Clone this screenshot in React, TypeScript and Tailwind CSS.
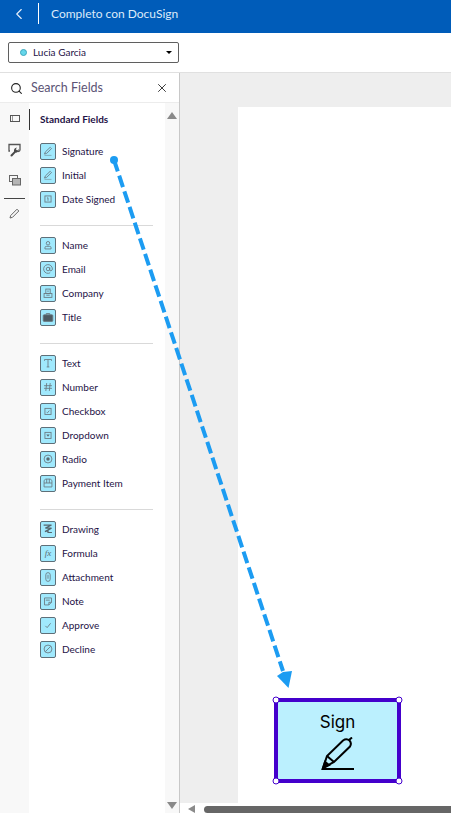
import React from 'react';
import { ChevronLeft, Search, X } from 'lucide-react';

const font = "font-['Lato','Noto_Sans',sans-serif]";

function Glyph({ children }: { children: React.ReactNode }) {
  return (
    <svg width="16" height="16" viewBox="0 0 16 16" fill="none" stroke="#6a7a82" strokeWidth="1">
      {children}
    </svg>
  );
}

const pencil = (
  <Glyph>
    <path d="M4 11.5 L5 9 L10.5 3.8 L12 5.3 L6.5 10.7 Z" />
    <path d="M4 13 H12" strokeOpacity="0.6" />
  </Glyph>
);

const groups = [
  [
    { label: 'Signature', icon: pencil },
    { label: 'Initial', icon: pencil },
    {
      label: 'Date Signed',
      icon: (
        <Glyph>
          <rect x="4.5" y="4.5" width="7" height="7" />
          <path d="M7 7 L8 6.5 V10" />
        </Glyph>
      ),
    },
  ],
  [
    {
      label: 'Name',
      icon: (
        <Glyph>
          <circle cx="8" cy="6" r="2" />
          <path d="M4.5 12.5 V11 Q4.5 9.5 6.5 9.5 H9.5 Q11.5 9.5 11.5 11 V12.5 Z" />
        </Glyph>
      ),
    },
    {
      label: 'Email',
      icon: (
        <Glyph>
          <circle cx="8" cy="8" r="2" />
          <path d="M10 6 V9 Q10 10.5 11.5 10 Q13 9.5 13 8 A5 5 0 1 0 10.5 12.3" />
        </Glyph>
      ),
    },
    {
      label: 'Company',
      icon: (
        <Glyph>
          <rect x="5.5" y="3.5" width="5" height="5" />
          <rect x="3.5" y="8.5" width="9" height="4.5" />
          <path d="M8 5 V7 M6 10.5 H10" />
        </Glyph>
      ),
    },
    {
      label: 'Title',
      icon: (
        <Glyph>
          <rect x="2.5" y="5.5" width="11" height="7.5" rx="1" fill="#4d5b63" />
          <path d="M6 5.5 V4 H10 V5.5" />
        </Glyph>
      ),
    },
  ],
  [
    {
      label: 'Text',
      icon: (
        <Glyph>
          <path d="M4 5.5 V4 H12 V5.5 M8 4 V12.5 M6.5 12.5 H9.5" />
        </Glyph>
      ),
    },
    {
      label: 'Number',
      icon: (
        <Glyph>
          <path d="M6.5 3.5 L5.5 12.5 M10.5 3.5 L9.5 12.5 M3.5 6.5 H12.5 M3.5 9.5 H12.5" />
        </Glyph>
      ),
    },
    {
      label: 'Checkbox',
      icon: (
        <Glyph>
          <rect x="4.5" y="5" width="7" height="7" />
          <path d="M6.5 9.5 L7.5 10 L9.5 7.5" />
        </Glyph>
      ),
    },
    {
      label: 'Dropdown',
      icon: (
        <Glyph>
          <rect x="4.5" y="5" width="7" height="7" />
          <path d="M6 7.5 H10 L8 10 Z" fill="#5b6b73" stroke="none" />
        </Glyph>
      ),
    },
    {
      label: 'Radio',
      icon: (
        <Glyph>
          <circle cx="8" cy="8" r="4.5" />
          <circle cx="8" cy="8" r="2" fill="#5b6b73" stroke="none" />
        </Glyph>
      ),
    },
    {
      label: 'Payment Item',
      icon: (
        <Glyph>
          <path d="M3.5 12.5 V5.5 L5 3.5 H11 L12.5 5.5 V12.5 Z M3.5 8 H12.5 M6.5 3.5 V8 M9.5 3.5 V8" />
        </Glyph>
      ),
    },
  ],
  [
    {
      label: 'Drawing',
      icon: (
        <Glyph>
          <path d="M3 3.5 H12 L5 7 H12 L4.5 11 L8 9.5 V12 H12.5" strokeWidth="1.4" stroke="#55656d" />
        </Glyph>
      ),
    },
    {
      label: 'Formula',
      icon: <span className="font-['Liberation_Serif',serif] text-[9px] italic leading-none text-[#5b6b73]">fx</span>,
    },
    {
      label: 'Attachment',
      icon: (
        <Glyph>
          <rect x="5.5" y="3" width="5" height="10" rx="2.5" />
          <path d="M8 5.5 V10" />
        </Glyph>
      ),
    },
    {
      label: 'Note',
      icon: (
        <Glyph>
          <path d="M4 4.5 H12 V9.5 L9 12.5 H4 Z M9 12.5 V9.5 H12 M5.5 7 H10" />
        </Glyph>
      ),
    },
    {
      label: 'Approve',
      icon: (
        <Glyph>
          <path d="M5 9 L7 11 L11 6" />
        </Glyph>
      ),
    },
    {
      label: 'Decline',
      icon: (
        <Glyph>
          <circle cx="8" cy="8" r="4.5" />
          <path d="M5 11 L11 5" />
        </Glyph>
      ),
    },
  ],
];

function FieldRow({ label, icon }: { label: string; icon: React.ReactNode }) {
  return (
    <div className="flex h-6 items-center gap-[6px]">
      <span className="flex h-[17px] w-4 items-center justify-center rounded-[2px] border border-[#5f6f78] bg-[#a0e9fd]">
        {icon}
      </span>
      <span className="text-[10px] text-[#1e1246]">{label}</span>
    </div>
  );
}

function Rail() {
  return (
    <div className="flex w-[29px] shrink-0 flex-col items-center bg-[#f8f8f8] pt-[11px]">
      <svg width="12" height="9" viewBox="0 0 12 9" fill="none" stroke="#555" strokeWidth="1">
        <rect x="1.5" y="1.5" width="9" height="6" />
        <path d="M3.5 1.5 V7.5" strokeOpacity="0.6" />
      </svg>
      <svg className="mt-[20px]" width="13" height="14" viewBox="0 0 13 14" fill="none">
        <path d="M2 8 L1 8 V1.5 H12 V7 Q12 8.5 10 8.5" stroke="#555" strokeWidth="1.3" />
        <path d="M2.5 12 L6 8.5 Q5.5 5 9 4.5 L7.8 6.3 L9.3 7.5 L10.8 6 Q10.8 9.7 7.5 9.8 L4 13.5 Q2 13.5 2.5 12 Z" fill="#4a4a4a" />
      </svg>
      <svg className="mt-[18px]" width="12" height="11" viewBox="0 0 12 11" fill="none" stroke="#666" strokeWidth="1">
        <rect x="0.5" y="0.5" width="8" height="6" />
        <rect x="3.5" y="3.5" width="8" height="6.5" fill="#b5b5b5" />
      </svg>
      <div className="mt-[12px] h-px w-[21px] bg-[#444]" />
      <svg className="mt-[9px]" width="11" height="11" viewBox="0 0 11 11" fill="none" stroke="#666" strokeWidth="1">
        <path d="M1 10 L1.7 7.5 L8 1.2 L9.8 3 L3.5 9.3 Z" />
      </svg>
    </div>
  );
}

export default function App() {
  return (
    <div className={`relative flex h-[813px] w-[451px] flex-col overflow-hidden bg-white ${font}`}>
      {/* top bar */}
      <div className="flex h-[33px] shrink-0 items-center bg-[#005cb9] pb-[6px] text-white">
        <ChevronLeft size={18} strokeWidth={1.5} className="ml-[10px] text-[#e6f0fa]" />
        <div className="ml-[10px] h-[21px] w-px bg-white" />
        <span className="ml-3 text-[12px] text-[#dcebfa]">Completo con DocuSign</span>
      </div>

      {/* recipient */}
      <div className="flex h-10 shrink-0 items-center border-b border-[#e0e0e0] pl-2">
        <div className="flex h-[21px] w-[171px] items-center rounded-[2px] border border-[#5f5f5f] pl-[11px] pr-[6px]">
          <span className="h-[7px] w-[7px] rounded-full border border-[#3ba7bd] bg-[#65d6ea]" />
          <span className="ml-[6px] text-[10px] text-[#1e1246]">Lucia Garcia</span>
          <span className="ml-auto h-0 w-0 border-x-[3px] border-t-[3.5px] border-x-transparent border-t-black" />
        </div>
      </div>

      <div className="flex min-h-0 flex-1">
        {/* field panel */}
        <div className="flex w-[180px] shrink-0 flex-col border-r border-[#c8c8c8]">
          <div className="flex h-[30px] shrink-0 items-center border-b border-[#ececec] pl-[10px] pr-[10px] pt-[1px]">
            <Search size={13} strokeWidth={2} className="text-[#222]" />
            <span className="ml-2 pt-[1px] text-[12.5px] text-[#5c5475]">Search Fields</span>
            <X size={14} strokeWidth={1.5} className="ml-auto text-[#222]" />
          </div>
          <div className="flex min-h-0 flex-1">
            <Rail />
            <div className="relative flex-1 pl-[11px] pr-3">
              <div className="absolute left-0 top-[6px] h-[21px] w-px bg-[#333]" />
              <div className="flex h-[32px] items-center text-[10px] font-bold text-[#1e1246]">Standard Fields</div>
              <div className="mt-[4px] flex flex-col">
                {groups.map((g, i) => (
                  <div key={i} className={i > 0 ? 'mt-[9px] border-t border-[#d9d9d9] pt-[7px]' : ''}>
                    <div className={`flex flex-col ${i < groups.length - 1 ? 'pb-[5px]' : ''}`}>
                      {g.map((f) => <FieldRow key={f.label} {...f} />)}
                    </div>
                  </div>
                ))}
              </div>
            </div>
            <div className="flex w-[14px] shrink-0 flex-col items-center justify-between bg-[#f8f8f8] pb-[4px] pt-[9px]">
              <span className="h-0 w-0 border-x-[5px] border-b-[7px] border-x-transparent border-b-[#8a8a8a]" />
              <span className="h-0 w-0 border-x-[5px] border-t-[7px] border-x-transparent border-t-[#8a8a8a]" />
            </div>
          </div>
        </div>

        {/* document canvas */}
        <div className="flex min-w-0 flex-1 flex-col">
          <div className="flex min-h-0 flex-1 flex-col bg-[#eeeeee] pl-[58px] pt-[34px]">
            <div className="relative flex-1 bg-white" />
          </div>
          <div className="flex h-[10px] shrink-0 items-end bg-white">
            <span className="ml-[8px] h-0 w-0 border-y-[4px] border-r-[7px] border-y-transparent border-r-[#8a8a8a]" />
            <div className="ml-[9px] h-[7px] flex-1 rounded-l-full bg-[#666666]" />
          </div>
        </div>
      </div>

      {/* drag arrow */}
      <svg className="absolute left-0 top-0" width="451" height="813" viewBox="0 0 451 813" fill="none">
        <circle cx="114" cy="160" r="4" fill="#1c9cf2" />
        <path d="M114 160 L283 671" stroke="#1c9cf2" strokeWidth="4" strokeDasharray="12 4.5" />
        <path d="M277 676 L283 672 L292 671 L288.5 688 Z" fill="#1c9cf2" />
      </svg>

      {/* placed signature field */}
      <div className="absolute left-[274px] top-[698px] flex h-[85px] w-[127px] flex-col items-center border-4 border-[#4400cc] bg-[#bbf0fe] pt-[10px]">
        <span className="font-['Inter',sans-serif] text-[17px] leading-[20px] text-black">Sign</span>
        <svg className="mt-[5px]" width="34" height="34" viewBox="0 0 34 34" fill="none" stroke="black" strokeWidth="2">
          <path d="M1 32 H33" />
          <path d="M2 31 L6 19 L22 3.5 Q25.5 1 28.5 3.5 Q31 6.5 29 9.5 L13 25 Z" />
          <path d="M6 19 L13 25 M28 3 L31 0.5" />
          <path d="M2 31 L4 25 L8 28 Z" fill="black" />
        </svg>
        <span className="absolute -left-[2px] -top-[2px] h-[7px] w-[7px] -translate-x-1/2 -translate-y-1/2 rounded-full border-[1.5px] border-[#4400cc] bg-white" />
        <span className="absolute -right-[2px] -top-[2px] h-[7px] w-[7px] translate-x-1/2 -translate-y-1/2 rounded-full border-[1.5px] border-[#4400cc] bg-white" />
        <span className="absolute -bottom-[2px] -left-[2px] h-[7px] w-[7px] -translate-x-1/2 translate-y-1/2 rounded-full border-[1.5px] border-[#4400cc] bg-white" />
        <span className="absolute -bottom-[2px] -right-[2px] h-[7px] w-[7px] translate-x-1/2 translate-y-1/2 rounded-full border-[1.5px] border-[#4400cc] bg-white" />
      </div>
    </div>
  );
}
